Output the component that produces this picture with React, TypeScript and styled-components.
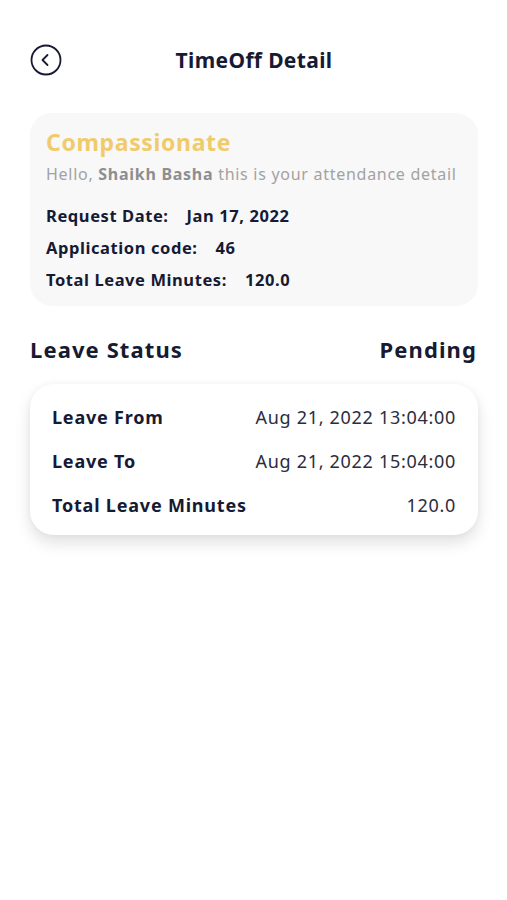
import React from 'react';
import styled, { createGlobalStyle } from 'styled-components';

const GlobalStyle = createGlobalStyle`
  body {
    margin: 0;
    background: #ffffff;
    font-family: "Noto Sans", "Open Sans", sans-serif;
    color: #161a33;
  }
`;

const summary = [
  { label: 'Request Date:', value: 'Jan 17, 2022' },
  { label: 'Application code:', value: '46' },
  { label: 'Total Leave Minutes:', value: '120.0' },
];

const leaveRows = [
  { label: 'Leave From', value: 'Aug 21, 2022 13:04:00' },
  { label: 'Leave To', value: 'Aug 21, 2022 15:04:00' },
  { label: 'Total Leave Minutes', value: '120.0' },
];

export default function App() {
  return (
    <>
      <GlobalStyle />
      <Page>
        <Header>
          <BackButton aria-label="back">
            <svg width="32" height="32" viewBox="0 0 32 32" fill="none">
              <circle cx="16" cy="16" r="14.5" stroke="#161a33" strokeWidth="1.8" />
              <path d="M17.5 11 L12.5 16 L17.5 21" stroke="#161a33" strokeWidth="1.8" strokeLinecap="round" strokeLinejoin="round" />
            </svg>
          </BackButton>
          <Title>TimeOff Detail</Title>
        </Header>

        <SummaryCard>
          <LeaveType>Compassionate</LeaveType>
          <Greeting>
            Hello, <strong>Shaikh Basha</strong> this is your attendance detail
          </Greeting>
          <SummaryList>
            {summary.map(item => (
              <SummaryRow key={item.label}>
                {item.label}
                <span>{item.value}</span>
              </SummaryRow>
            ))}
          </SummaryList>
        </SummaryCard>

        <StatusBar>
          <StatusText>Leave Status</StatusText>
          <StatusText>Pending</StatusText>
        </StatusBar>

        <DetailCard>
          {leaveRows.map(row => (
            <DetailRow key={row.label}>
              <DetailLabel>{row.label}</DetailLabel>
              <DetailValue>{row.value}</DetailValue>
            </DetailRow>
          ))}
        </DetailCard>
      </Page>
    </>
  );
}

const Page = styled.div`
  width: 507px;
  min-height: 900px;
  box-sizing: border-box;
  padding: 44px 29px 0 30px;
`;

const Header = styled.div`
  position: relative;
  display: flex;
  align-items: center;
  justify-content: center;
  height: 32px;
`;

const BackButton = styled.button`
  position: absolute;
  left: 0;
  top: 0;
  width: 32px;
  height: 32px;
  padding: 0;
  border: none;
  background: none;
  display: flex;
`;

const Title = styled.h1`
  margin: 0;
  font-size: 21px;
  font-weight: 700;
  letter-spacing: 0.35px;
`;

const SummaryCard = styled.div`
  margin-top: 37px;
  background: #f8f8f8;
  border-radius: 22px;
  padding: 14px 16px 10px;
`;

const LeaveType = styled.div`
  font-size: 23px;
  font-weight: 700;
  color: #f0cb6c;
  line-height: 30px;
  letter-spacing: 0.65px;
`;

const Greeting = styled.div`
  margin-top: 6px;
  font-size: 16px;
  color: #a2a2a2;
  line-height: 22px;
  letter-spacing: 0.72px;
  white-space: nowrap;
  strong {
    font-weight: 700;
    color: #8e8e8e;
  }
`;

const SummaryList = styled.div`
  margin-top: 15px;
  display: flex;
  flex-direction: column;
`;

const SummaryRow = styled.div`
  font-size: 16.5px;
  font-weight: 700;
  line-height: 32px;
  letter-spacing: 0.58px;
  span {
    margin-left: 18px;
  }
`;

const StatusBar = styled.div`
  margin-top: 29px;
  display: flex;
  justify-content: space-between;
  align-items: center;
  padding-right: 1px;
`;

const StatusText = styled.div`
  font-size: 22px;
  font-weight: 700;
  line-height: 28px;
  letter-spacing: 1.1px;
`;

const DetailCard = styled.div`
  margin-top: 21px;
  background: #ffffff;
  border-radius: 24px;
  box-shadow: 0 8px 16px rgba(0, 0, 0, 0.12), 0 0 6px rgba(0, 0, 0, 0.04);
  padding: 11px 22px 8px;
  display: flex;
  flex-direction: column;
`;

const DetailRow = styled.div`
  display: flex;
  justify-content: space-between;
  align-items: center;
  height: 44px;
`;

const DetailLabel = styled.div`
  font-size: 18px;
  font-weight: 700;
  letter-spacing: 0.8px;
`;

const DetailValue = styled.div`
  font-size: 18px;
  font-weight: 400;
  color: #2a2d3e;
  letter-spacing: 0.7px;
`;
